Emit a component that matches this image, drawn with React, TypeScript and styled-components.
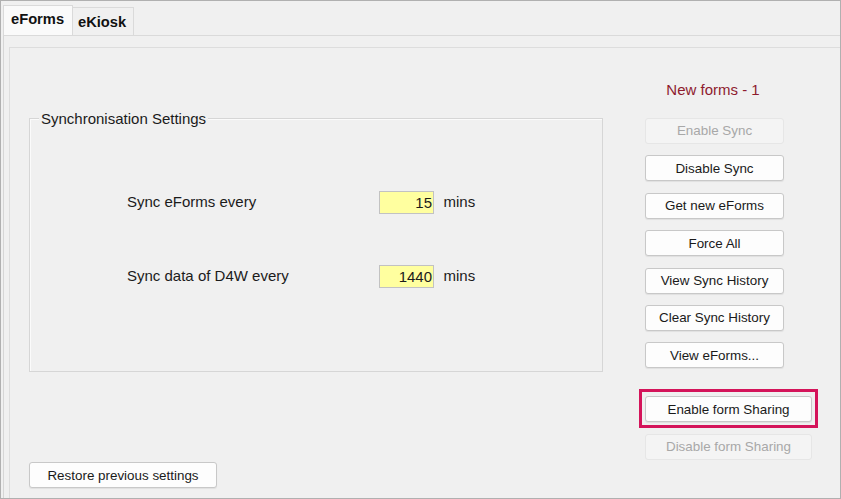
import React from "react";
import styled, { createGlobalStyle } from "styled-components";

const Global = createGlobalStyle`
  html, body { margin: 0; padding: 0; background: #f0f0f0; }
  body { font-family: "Liberation Sans", Arial, sans-serif; color: #1b1b1b; }
  * { box-sizing: border-box; }
`;

const Frame = styled.div`
  width: 841px;
  height: 499px;
  border: 1px solid #b0b0b0;
  background: #f0f0f0;
  display: flex;
  flex-direction: column;
`;

const TabStrip = styled.div`
  height: 34px;
  flex: none;
  display: flex;
  align-items: flex-end;
  padding-left: 2px;
`;

const Tab = styled.div<{ $active?: boolean }>`
  height: ${(p) => (p.$active ? 30 : 28)}px;
  width: ${(p) => (p.$active ? 70 : 61)}px;
  border: 1px solid #dadada;
  border-bottom: none;
  ${(p) => (p.$active ? "" : "border-left: none;")}
  background: ${(p) => (p.$active ? "#fafafa" : "#f0f0f0")};
  font-weight: bold;
  font-size: 14.7px;
  display: flex;
  align-items: center;
  padding-left: ${(p) => (p.$active ? 7 : 5)}px;
  padding-bottom: ${(p) => (p.$active ? 4 : 0)}px;
  color: #111;
`;

const Panel = styled.div`
  flex: 1;
  margin-left: 2px;
  border-top: 1px solid #dadada;
  border-left: 1px solid #d6d6d6;
  padding: 11px 0 0 5px;
  display: flex;
`;

const Inner = styled.div`
  flex: 1;
  border-top: 1px solid #dddddd;
  border-left: 1px solid #dddddd;
  display: flex;
`;

const LeftCol = styled.div`
  width: 610px;
  display: flex;
  flex-direction: column;
  align-items: flex-start;
  padding: 70px 0 10px 19px;
`;

const GroupBox = styled.div`
  position: relative;
  width: 574px;
  height: 254px;
  border: 1px solid #d6d6d6;
  box-shadow: inset 1px 1px 0 #fbfbfb;
  padding: 72px 0 0 97px;
`;

const Legend = styled.span`
  position: absolute;
  top: -9px;
  left: 9px;
  padding: 0 2px;
  background: #f0f0f0;
  font-size: 15px;
  line-height: 17px;
`;

const Rows = styled.div`
  display: grid;
  grid-template-columns: 242.5px 55px auto;
  column-gap: 9.5px;
  row-gap: 51px;
  align-items: center;
  font-size: 15px;
`;

const Label = styled.span`
  line-height: 17px;
  margin-top: -2px;
`;

const NumInput = styled.div`
  height: 23px;
  border: 1px solid #c2c2c2;
  background: #ffff9f;
  text-align: right;
  padding-right: 1px;
  font-size: 15px;
  line-height: 21px;
`;

const Unit = styled.span`
  line-height: 17px;
  margin-top: -2px;
`;

const Button = styled.div<{ $w?: number; $disabled?: boolean }>`
  width: ${(p) => p.$w ?? 139}px;
  height: 26px;
  flex: none;
  display: flex;
  align-items: center;
  justify-content: center;
  font-size: 13.4px;
  border-radius: 3px;
  border: 1px solid ${(p) => (p.$disabled ? "#e6e6e6" : "#c8c8c8")};
  background: ${(p) => (p.$disabled ? "#f4f4f4" : "#fdfdfd")};
  color: ${(p) => (p.$disabled ? "#a8a8a8" : "#1a1a1a")};
  box-shadow: ${(p) => (p.$disabled ? "none" : "0 1px 1px rgba(0,0,0,0.07)")};
`;

const RestoreButton = styled(Button)`
  margin-top: auto;
`;

const RightCol = styled.div`
  display: flex;
  flex-direction: column;
  align-items: flex-start;
  padding: 34px 0 0 25px;
  gap: 11.4px;
`;

const Heading = styled.div`
  width: 139px;
  text-align: center;
  color: #8e1b2e;
  font-size: 15px;
  line-height: 16px;
  margin-bottom: 8.6px;
  padding-right: 3px;
`;

const Highlight = styled.div`
  border: 3px solid #d4145a;
  padding: 4px 3px 3px 3px;
  margin: 9.4px 0 -6px -6px;
`;

export default function App() {
  return (
    <>
      <Global />
      <Frame>
        <TabStrip>
          <Tab $active>eForms</Tab>
          <Tab>eKiosk</Tab>
        </TabStrip>
        <Panel>
          <Inner>
            <LeftCol>
              <GroupBox>
                <Legend>Synchronisation Settings</Legend>
                <Rows>
                  <Label>Sync eForms every</Label>
                  <NumInput>15</NumInput>
                  <Unit>mins</Unit>
                  <Label>Sync data of D4W every</Label>
                  <NumInput>1440</NumInput>
                  <Unit>mins</Unit>
                </Rows>
              </GroupBox>
              <RestoreButton $w={188}>Restore previous settings</RestoreButton>
            </LeftCol>
            <RightCol>
              <Heading>New forms - 1</Heading>
              <Button $disabled>Enable Sync</Button>
              <Button>Disable Sync</Button>
              <Button>Get new eForms</Button>
              <Button>Force All</Button>
              <Button>View Sync History</Button>
              <Button>Clear Sync History</Button>
              <Button>View eForms...</Button>
              <Highlight>
                <Button $w={167}>Enable form Sharing</Button>
              </Highlight>
              <Button $w={167} $disabled>
                Disable form Sharing
              </Button>
            </RightCol>
          </Inner>
        </Panel>
      </Frame>
    </>
  );
}
